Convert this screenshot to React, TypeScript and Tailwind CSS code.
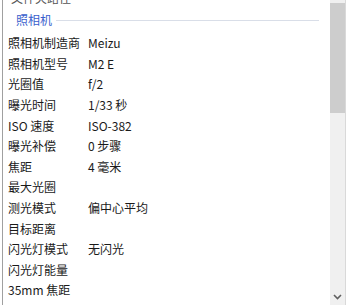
const rows: [string, string][] = [
  ['照相机制造商', 'Meizu'],
  ['照相机型号', 'M2 E'],
  ['光圈值', 'f/2'],
  ['曝光时间', '1/33 秒'],
  ['ISO 速度', 'ISO-382'],
  ['曝光补偿', '0 步骤'],
  ['焦距', '4 毫米'],
  ['最大光圈', ''],
  ['测光模式', '偏中心平均'],
  ['目标距离', ''],
  ['闪光灯模式', '无闪光'],
  ['闪光灯能量', ''],
  ['35mm 焦距', ''],
];

export default function App() {
  return (
    <div
      className="flex h-[305px] w-[346px] overflow-hidden bg-white text-[12px] text-[#1a1a1a]"
      style={{ fontFamily: '"Noto Sans CJK SC", "Noto Sans", sans-serif' }}
    >
      <div className="ml-[2px] w-px bg-[#a0a0a0]" />
      <div className="flex min-w-0 flex-1 flex-col overflow-hidden">
        <div className="-mt-[12px] h-[20px] shrink-0 pl-[8px] leading-[20px] text-[#555]">文件夹路径</div>
        <div className="flex h-[24px] shrink-0 items-center pl-[13px] pr-[11px]">
          <span className="text-[#3a5fcd]">照相机</span>
          <div className="ml-[4px] h-px flex-1 bg-[#d9dee8]" />
        </div>
        <div className="mt-[1px] flex flex-col">
          {rows.map(([k, v]) => (
            <div key={k} className="flex h-[20.6px] shrink-0 items-center">
              <span className="w-[85px] pl-[5px]">{k}</span>
              <span>{v}</span>
            </div>
          ))}
        </div>
      </div>
      <div className="flex w-[15px] flex-col bg-[#f0f0f0]">
        <div className="mt-[3px] h-[110px] bg-[#cdcdcd]" />
        <div className="flex-1" />
        <div className="mb-[5px] flex justify-center">
          <svg width="9" height="6" viewBox="0 0 9 6">
            <path d="M1 1 L4.5 4.5 L8 1" fill="none" stroke="#606060" strokeWidth="1.6" />
          </svg>
        </div>
      </div>
      <div className="w-px bg-[#d9d9d9]" />
    </div>
  );
}
